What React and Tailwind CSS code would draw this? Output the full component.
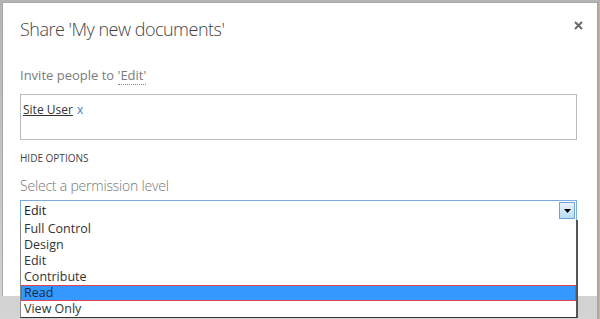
import { useState } from "react";

const levels = ["Full Control", "Design", "Edit", "Contribute", "Read", "View Only"];

export default function App() {
  const [selected] = useState("Read");

  return (
    <div
      className="w-[600px] h-[319px] overflow-hidden bg-gradient-to-b from-[#b4b4b4] to-[#d4d4d4] relative"
      style={{ fontFamily: '"Open Sans", "Noto Sans", sans-serif' }}
    >
      <div className="flex h-full">
        {/* dialog */}
        <div className="ml-[2px] mt-[2px] w-[595px] h-[294px] bg-white border-t border-l border-[#a8a8a8] relative">
          <div className="flex items-start justify-between pl-[17px] pr-[14px] pt-[14px]">
            <h1 className="text-[18px] font-light text-[#444] tracking-[-0.5px] leading-[24px]">
              Share 'My new documents'
            </h1>
            <svg width="9" height="9" viewBox="0 0 9 9" className="mt-[4px]">
              <path d="M1 1l7 7M8 1L1 8" stroke="#6a6a6a" strokeWidth="2" />
            </svg>
          </div>

          <div className="pl-[17px] pr-[20px]">
            <p className="mt-[25px] text-[13px] text-[#7a7a7a] leading-[18px]">
              Invite people to{" "}
              <span className="border-b border-dotted border-[#888]">'Edit'</span>
            </p>

            <div className="mt-[10px] h-[46px] border border-[#bcbcbc] px-[2px] pt-[5px] leading-[16px]">
              <span className="text-[12px] text-[#333] underline">Site User</span>{" "}
              <span className="text-[12px] text-[#3b83c6]">x</span>
            </div>

            <p className="mt-[12px] text-[10px] text-[#444] leading-[12px]">HIDE OPTIONS</p>

            <p className="mt-[12px] text-[14px] font-light text-[#777] leading-[20px] tracking-[-0.2px]">
              Select a permission level
            </p>

            <div className="mt-[4px] relative">
              <div className="h-[21px] border border-[#7aaee0] flex items-center justify-between pl-[3px] pr-[1px]">
                <span className="text-[12.5px] text-[#222] leading-[16px]">Edit</span>
                <span className="w-[16px] h-[17px] border border-[#6fa3d6] bg-gradient-to-b from-[#e8f3fc] to-[#b9dbf4] flex items-center justify-center">
                  <svg width="7" height="4" viewBox="0 0 7 4">
                    <path d="M0 0h7L3.5 4z" fill="#000" />
                  </svg>
                </span>
              </div>

              {/* open list */}
              <ul className="absolute left-0 top-[20px] w-[558px] bg-white border-l border-b border-r-2 border-l-[#8a8a8a] border-b-[#333] border-r-[#555] pt-[1px]">
                {levels.map((level) =>
                  level === selected ? (
                    <li
                      key={level}
                      className="h-[16px] bg-[#3399ff] border border-[#e8404f] pl-[2px] text-[12.5px] leading-[14px] text-[#1c2a3a]"
                    >
                      {level}
                    </li>
                  ) : (
                    <li
                      key={level}
                      className="h-[16px] pl-[3px] text-[12.5px] leading-[16px] text-[#333]"
                    >
                      {level}
                    </li>
                  )
                )}
              </ul>
            </div>
          </div>
        </div>
        <div className="w-[3px] h-full bg-[#a8a8a8] border-r border-[#c8b88a] mt-[2px]"></div>
      </div>
    </div>
  );
}
